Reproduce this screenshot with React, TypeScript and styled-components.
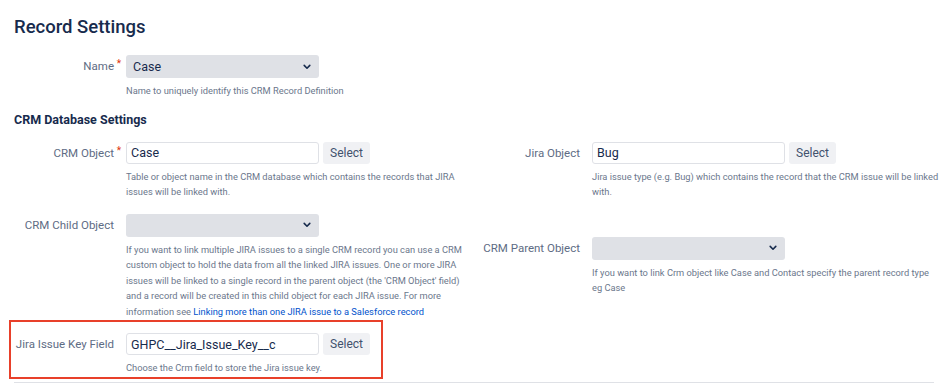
import React from 'react';
import styled, { createGlobalStyle } from 'styled-components';

const FONT = 'Roboto, "Liberation Sans", Arial, sans-serif';

const Colors = {
  NAVY: '#172b4d',
  LABEL: '#5e6c84',
  HELP: '#6b778c',
  FIELD: '#dfe1e6',
  BORDER: '#dfe1e6',
  BUTTON: '#f0f1f4',
  BUTTON_TEXT: '#42526e',
  LINK: '#0052cc',
  REQUIRED: '#de350b',
  HIGHLIGHT: '#e8402a',
};

const GlobalStyle = createGlobalStyle`
  body {
    margin: 0;
    background: #ffffff;
    font-family: ${FONT};
    color: ${Colors.NAVY};
  }
`;

const Chevron = () => (
  <svg width="8" height="6" viewBox="0 0 8 6">
    <path d="M1.2 1.4 L4 4.2 L6.8 1.4" fill="none" stroke={Colors.NAVY} strokeWidth="1.6" strokeLinecap="round" strokeLinejoin="round" />
  </svg>
);

type FieldProps = {
  label: string;
  required?: boolean;
  children: React.ReactNode;
  help?: React.ReactNode;
};

const Field = ({ label, required, children, help }: FieldProps) => (
  <StyledFieldGroup>
    <StyledLabel>
      {label}
      {required && <StyledRequired>*</StyledRequired>}
    </StyledLabel>
    <StyledFieldBody>
      <StyledControls>{children}</StyledControls>
      {help && <StyledHelp>{help}</StyledHelp>}
    </StyledFieldBody>
  </StyledFieldGroup>
);

const TextWithPicker = ({ value }: { value: string }) => (
  <>
    <StyledInput defaultValue={value} />
    <StyledButton>Select</StyledButton>
  </>
);

const Dropdown = ({ value }: { value?: string }) => (
  <StyledSelect>
    <span>{value}</span>
    <Chevron />
  </StyledSelect>
);

export default function App() {
  return (
    <StyledPage>
      <GlobalStyle />
      <StyledTitle>Record Settings</StyledTitle>
      <StyledNameRow>
        <Field label="Name" required help="Name to uniquely identify this CRM Record Definition">
          <Dropdown value="Case" />
        </Field>
      </StyledNameRow>
      <StyledSectionTitle>CRM Database Settings</StyledSectionTitle>
      <StyledGrid>
        <Field
          label="CRM Object"
          required
          help="Table or object name in the CRM database which contains the records that JIRA issues will be linked with."
        >
          <TextWithPicker value="Case" />
        </Field>
        <Field
          label="Jira Object"
          help="Jira issue type (e.g. Bug) which contains the record that the CRM issue will be linked with."
        >
          <TextWithPicker value="Bug" />
        </Field>
        <Field
          label="CRM Child Object"
          help={
            <>
              If you want to link multiple JIRA issues to a single CRM record you can use a CRM custom object to hold
              the data from all the linked JIRA issues. One or more JIRA issues will be linked to a single record in the
              parent object (the 'CRM Object' field) and a record will be created in this child object for each JIRA
              issue. For more information see{' '}
              <StyledLink href="#">Linking more than one JIRA issue to a Salesforce record</StyledLink>
            </>
          }
        >
          <Dropdown />
        </Field>
        <Field
          label="CRM Parent Object"
          help="If you want to link Crm object like Case and Contact specify the parent record type eg Case"
        >
          <Dropdown />
        </Field>
        <StyledHighlight>
          <Field label="Jira Issue Key Field" help="Choose the Crm field to store the Jira issue key.">
            <TextWithPicker value="GHPC__Jira_Issue_Key__c" />
          </Field>
        </StyledHighlight>
      </StyledGrid>
      <StyledDivider />
    </StyledPage>
  );
}

const StyledPage = styled.div`
  padding: 14px 10px 0 14px;
  width: 944px;
  box-sizing: border-box;
`;

const StyledTitle = styled.h1`
  margin: 0;
  font-size: 18.5px;
  font-weight: 500;
  line-height: 26px;
  color: ${Colors.NAVY};
`;

const StyledNameRow = styled.div`
  margin-top: 15px;
  width: 454px;
`;

const StyledSectionTitle = styled.h2`
  margin: 13px 0 0;
  font-size: 12.5px;
  font-weight: 700;
  line-height: 16px;
  color: ${Colors.NAVY};
`;

const StyledGrid = styled.div`
  display: grid;
  grid-template-columns: 454px 460px;
  column-gap: 12px;
  row-gap: 14px;
  align-items: center;
  margin-top: 14px;
`;

const StyledFieldGroup = styled.div`
  display: grid;
  grid-template-columns: 100px minmax(0, 1fr);
  column-gap: 12px;
  align-items: start;
`;

const StyledLabel = styled.label`
  position: relative;
  text-align: right;
  font-size: 11.5px;
  line-height: 22px;
  color: ${Colors.LABEL};
  white-space: nowrap;
`;

const StyledRequired = styled.span`
  position: absolute;
  top: -2px;
  right: -7px;
  font-size: 10px;
  color: ${Colors.REQUIRED};
`;

const StyledFieldBody = styled.div`
  display: flex;
  flex-direction: column;
`;

const StyledControls = styled.div`
  display: flex;
  gap: 4px;
`;

const StyledInput = styled.input`
  box-sizing: border-box;
  width: 193px;
  height: 22px;
  margin: 0;
  padding: 0 4px;
  border: 1px solid ${Colors.BORDER};
  border-radius: 3px;
  background: #ffffff;
  font-family: ${FONT};
  font-size: 12.5px;
  color: ${Colors.NAVY};
  outline: none;
`;

const StyledButton = styled.button`
  box-sizing: border-box;
  width: 47px;
  height: 22px;
  padding: 0;
  border: none;
  border-radius: 3px;
  background: ${Colors.BUTTON};
  font-family: ${FONT};
  font-size: 12px;
  color: ${Colors.BUTTON_TEXT};
  cursor: pointer;
`;

const StyledSelect = styled.div`
  box-sizing: border-box;
  display: flex;
  align-items: center;
  justify-content: space-between;
  width: 193px;
  height: 23px;
  padding: 0 8px 0 7px;
  border-radius: 3px;
  background: ${Colors.FIELD};
  font-size: 12.5px;
  color: ${Colors.NAVY};
`;

const StyledHelp = styled.div`
  margin-top: 5px;
  font-size: 9.3px;
  line-height: 15.5px;
  color: ${Colors.HELP};
`;

const StyledLink = styled.a`
  color: ${Colors.LINK};
  text-decoration: none;
`;

const StyledHighlight = styled.div`
  box-sizing: border-box;
  width: 374px;
  margin: -13px 0 0 -5px;
  padding: 11px 0 1px 3px;
  border: 2px solid ${Colors.HIGHLIGHT};
`;

const StyledDivider = styled.div`
  margin-top: 3px;
  height: 1px;
  background: ${Colors.BORDER};
`;
